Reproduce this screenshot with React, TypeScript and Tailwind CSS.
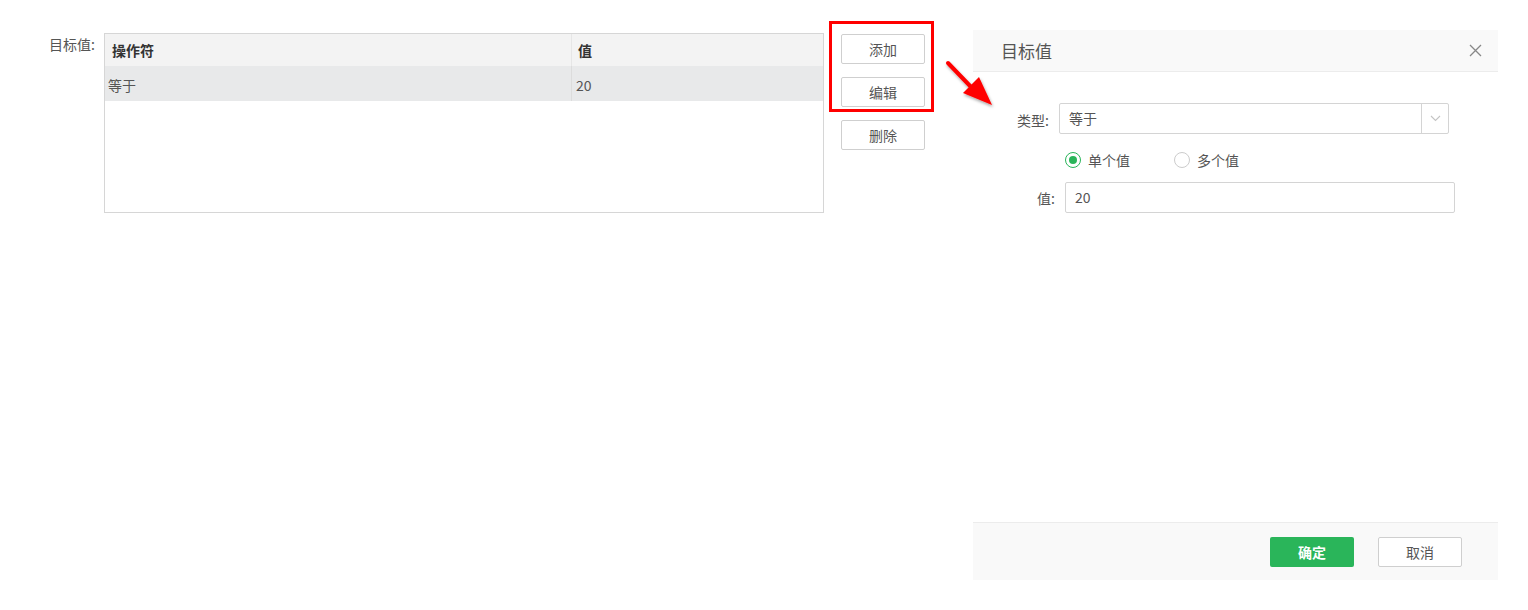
import React from 'react';

const font = "font-['Noto_Sans_CJK_SC',sans-serif]";

function Btn({ children }: { children: React.ReactNode }) {
  return (
    <button className="w-[84px] h-[30px] border border-[#cfcfcf] rounded-[2px] bg-white text-[14px] text-[#555] leading-none pb-[1px]">
      {children}
    </button>
  );
}

function Radio({ checked, label }: { checked?: boolean; label: string }) {
  return (
    <div className="flex items-center">
      <span
        className={
          checked
            ? 'w-[16px] h-[16px] rounded-full border border-[#2ab55a] flex items-center justify-center'
            : 'w-[16px] h-[16px] rounded-full border border-[#cccccc]'
        }
      >
        {checked && <span className="w-[8px] h-[8px] rounded-full bg-[#2ab55a]" />}
      </span>
      <span className="ml-[7px] text-[14px] text-[#555] leading-none">{label}</span>
    </div>
  );
}

export default function App() {
  return (
    <div className={`relative w-[1528px] h-[610px] bg-white overflow-hidden ${font}`}>
      <div className="flex items-start pt-[30px]">
        {/* Left: target value table */}
        <div className="flex items-start pl-[49px] mt-[3px]">
          <div className="w-[55px] pt-[3px] text-[14px] text-[#555] leading-[16px]">目标值:</div>
          <div className="w-[720px] h-[180px] border border-[#d6d6d6] bg-white">
            <div className="flex h-[32px] bg-[#f3f3f3] text-[14px] font-bold text-[#333]">
              <div className="w-[467px] pl-[7px] flex items-center border-r border-[#e6e6e6]">操作符</div>
              <div className="flex-1 pl-[6px] flex items-center">值</div>
            </div>
            <div className="flex h-[35px] bg-[#e8e9ea] text-[14px] text-[#555]">
              <div className="w-[467px] pl-[3px] pt-[3px] flex items-center border-r border-[#dcdcdc]">等于</div>
              <div className="flex-1 pl-[4px] pt-[3px] flex items-center">20</div>
            </div>
          </div>
          <div className="ml-[17px] mt-[1px] flex flex-col gap-[13px]">
            <Btn>添加</Btn>
            <Btn>编辑</Btn>
            <Btn>删除</Btn>
          </div>
        </div>

        {/* Right: dialog */}
        <div className="ml-[48px] w-[525px] h-[550px] flex flex-col bg-white">
          <div className="h-[42px] bg-[#f9f9f9] border-b border-[#ececec] flex items-center justify-between pl-[28px] pr-[16px]">
            <span className="text-[17px] text-[#555] leading-none">目标值</span>
            <svg width="13" height="13" viewBox="0 0 13 13" className="text-[#888]">
              <path d="M1 1 L12 12 M12 1 L1 12" stroke="currentColor" strokeWidth="1.3" />
            </svg>
          </div>
          <div className="flex-1 pt-[31px]">
            <div className="flex items-center">
              <div className="w-[76px] pt-[3px] text-right text-[14px] text-[#555]">类型:</div>
              <div className="ml-[10px] w-[390px] h-[31px] border border-[#d4d4d4] rounded-[2px] flex">
                <div className="flex-1 flex items-center pl-[9px] text-[14px] text-[#555]">等于</div>
                <div className="w-[27px] border-l border-[#d4d4d4] flex items-center justify-center">
                  <svg width="11" height="7" viewBox="0 0 11 7">
                    <path d="M1 1 L5.5 5.5 L10 1" fill="none" stroke="#c4c4c4" strokeWidth="1.1" />
                  </svg>
                </div>
              </div>
            </div>
            <div className="flex items-center gap-[44px] pl-[92px] mt-[18px]">
              <Radio checked label="单个值" />
              <Radio label="多个值" />
            </div>
            <div className="flex items-center mt-[14px]">
              <div className="w-[82px] pt-[2px] text-right text-[14px] text-[#555]">值:</div>
              <div className="ml-[10px] w-[390px] h-[31px] border border-[#d4d4d4] rounded-[2px] flex items-center pl-[9px] text-[14px] text-[#555]">
                20
              </div>
            </div>
          </div>
          <div className="h-[58px] bg-[#f9f9f9] border-t border-[#ececec] flex items-center justify-end gap-[24px] pr-[36px]">
            <button className="w-[84px] h-[30px] rounded-[2px] bg-[#2ab55a] text-white text-[14px] font-bold leading-none">确定</button>
            <button className="w-[84px] h-[30px] rounded-[2px] border border-[#cfcfcf] bg-white text-[#555] text-[14px] leading-none">取消</button>
          </div>
        </div>
      </div>

      {/* Annotation: red highlight box */}
      <div className="absolute left-[829px] top-[21px] w-[105px] h-[91px] border-[3px] border-[#ff0000] pointer-events-none" />

      {/* Annotation: red arrow */}
      <svg className="absolute left-[940px] top-[55px] pointer-events-none" width="60" height="58" viewBox="0 0 60 58">
        <defs>
          <filter id="sh" x="-20%" y="-20%" width="150%" height="150%">
            <feDropShadow dx="1" dy="2" stdDeviation="1.5" floodColor="#000" floodOpacity="0.35" />
          </filter>
        </defs>
        <g filter="url(#sh)">
          <path d="M8 8 L33 34" stroke="#ff0000" strokeWidth="4" strokeLinecap="round" />
          <path d="M52 50 L23 38 L39 22 Z" fill="#ff0000" />
        </g>
      </svg>
    </div>
  );
}
